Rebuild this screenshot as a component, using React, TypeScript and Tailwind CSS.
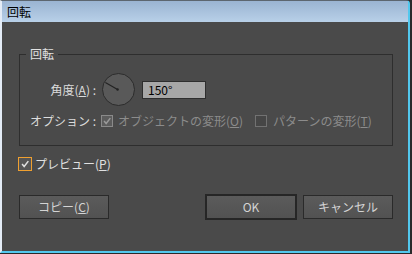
import React from "react";

const FONT = { fontFamily: '"Noto Sans CJK JP", "Noto Sans", sans-serif' };

function Check({ color }: { color: string }) {
  return (
    <svg viewBox="0 0 12 12" className="w-full h-full">
      <polyline points="2.5,6 5,9 10,2.5" fill="none" stroke={color} strokeWidth="1.8" />
    </svg>
  );
}

function Btn({ children, primary }: { children: React.ReactNode; primary?: boolean }) {
  return (
    <div
      className={`flex items-center justify-center text-[12px] leading-[16px] text-[#d4d4d4] bg-gradient-to-b from-[#5b5b5b] to-[#525252] ${
        primary ? "w-[92px] h-[26px] border-2 border-[#262626]" : "w-[90px] h-[24px] border border-[#2a2a2a]"
      }`}
    >
      {children}
    </div>
  );
}

export default function App() {
  return (
    <div className="w-[412px] h-[254px] bg-[#2a2a2a]" style={FONT}>
      <div className="w-[410px] h-[253px] flex flex-col border-l-2 border-l-[#e4ecf6] border-r-2 border-r-[#52c8ee] border-b-2 border-b-[#52c8ee] border-t border-t-[#5c6670] rounded-tr-[4px]">
        <div className="h-[21px] flex items-center pl-[5px] bg-gradient-to-b from-[#9ab4d2] to-[#b8d0e8] text-black text-[12px] leading-[16px]">
          回転
        </div>
        <div className="flex-1 bg-[#4a4a4a] flex flex-col">
          <fieldset className="mt-[24px] ml-[17px] w-[374px] border border-[#2e2e2e] px-0">
            <legend className="ml-[6px] px-[4px] text-[12px] leading-[16px] text-[#e2e2e2]">回転</legend>
            <div className="pl-[10px] pb-[16px]">
              <div className="mt-[11px] flex items-center h-[33px]">
                <div className="w-[66px] flex justify-end whitespace-nowrap text-[12px] leading-[16px] text-[#dcdcdc]">
                  <span>
                    角度(<span className="underline">A</span>) :
                  </span>
                </div>
                <div className="ml-[6px] w-[33px] h-[33px] rounded-full bg-[#595959] border border-[#2c2c2c]">
                  <svg viewBox="0 0 33 33" className="w-full h-full">
                    <line x1="15.5" y1="16.5" x2="2.5" y2="9" stroke="#222" strokeWidth="1.2" />
                    <circle cx="15.5" cy="16.5" r="1.3" fill="#222" />
                  </svg>
                </div>
                <div className="ml-[7px] w-[64px] h-[18px] bg-[#a7a7a7] border border-[#2e2e2e] flex items-center pl-[5px] text-[12px] leading-[16px] text-black">
                  150°
                </div>
              </div>
              <div className="mt-[7px] flex items-center h-[16px] text-[12px] leading-[16px] whitespace-nowrap">
                <div className="w-[66px] flex justify-end text-[#dcdcdc]">
                  <span>オプション :</span>
                </div>
                <div className="ml-[5px] w-[12px] h-[12px] shrink-0 border border-[#8a8a8a] bg-[#5c5c5c]">
                  <Check color="#9a9a9a" />
                </div>
                <div className="ml-[5px] text-[#8c8c8c]">
                  オブジェクトの変形(<span className="underline">O</span>)
                </div>
                <div className="ml-[12px] w-[12px] h-[12px] shrink-0 border border-[#727272] bg-[#464646]" />
                <div className="ml-[6px] text-[#8c8c8c]">
                  パターンの変形(<span className="underline">T</span>)
                </div>
              </div>
            </div>
          </fieldset>
          <div className="mt-[11px] ml-[16px] flex items-center h-[14px]">
            <div className="w-[14px] h-[14px] border border-[#f0a030] bg-[#555555] p-[1px]">
              <Check color="#e0e0e0" />
            </div>
            <div className="ml-[3px] text-[12px] leading-[16px] text-[#e0e0e0]">
              プレビュー(<span className="underline">P</span>)
            </div>
          </div>
          <div className="mt-[23px] ml-[17px] flex items-center">
            <Btn>
              コピー(<span className="underline">C</span>)
            </Btn>
            <div className="ml-[96px]">
              <Btn primary>OK</Btn>
            </div>
            <div className="ml-[6px]">
              <Btn>キャンセル</Btn>
            </div>
          </div>
        </div>
      </div>
    </div>
  );
}
